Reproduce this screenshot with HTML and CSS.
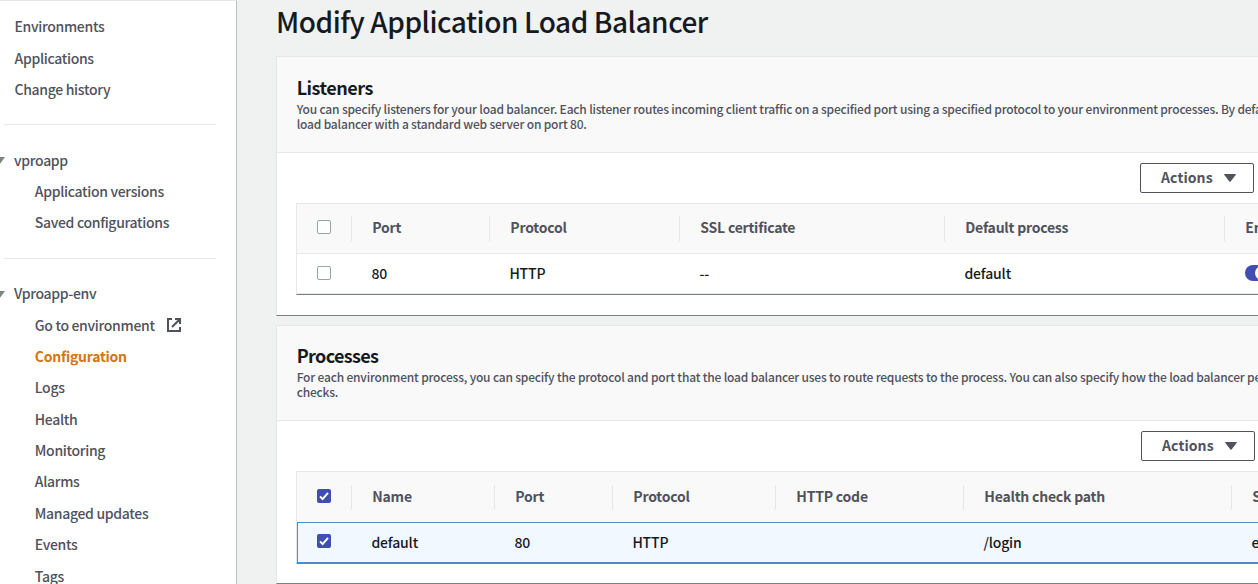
FILE: index.html
```
<!DOCTYPE html>
<html lang="en">
<head>
<meta charset="utf-8">
<title>Modify Application Load Balancer</title>
<link rel="stylesheet" href="styles.css">
</head>
<body>
<div class="app">
  <nav class="sidebar">
    <ul class="nav top">
      <li><a>Environments</a></li>
      <li><a>Applications</a></li>
      <li><a>Change history</a></li>
    </ul>
    <hr class="rule first">
    <div class="group">
      <svg class="caret" width="12" height="8" viewBox="0 0 12 8"><path d="M0 0h12L6 8z"/></svg>
      <span>vproapp</span>
    </div>
    <ul class="nav sub">
      <li><a>Application versions</a></li>
      <li><a>Saved configurations</a></li>
    </ul>
    <hr class="rule second">
    <div class="group">
      <svg class="caret" width="12" height="8" viewBox="0 0 12 8"><path d="M0 0h12L6 8z"/></svg>
      <span>Vproapp-env</span>
    </div>
    <ul class="nav sub">
      <li><a>Go to environment</a><svg class="external" width="16" height="16" viewBox="0 0 16 16"><path d="M6 2H2v12h12v-4M9 2h5v5M14 2L6 10"/></svg></li>
      <li class="active"><a>Configuration</a></li>
      <li><a>Logs</a></li>
      <li><a>Health</a></li>
      <li><a>Monitoring</a></li>
      <li><a>Alarms</a></li>
      <li><a>Managed updates</a></li>
      <li><a>Events</a></li>
      <li><a>Tags</a></li>
    </ul>
  </nav>
  <main class="main">
    <h1>Modify Application Load Balancer</h1>
    <section class="card">
      <header class="card-head">
        <h2>Listeners</h2>
        <p>You can specify listeners for your load balancer. Each listener routes incoming client traffic on a specified port using a specified protocol to your environment processes. By default,<br>load balancer with a standard web server on port 80.</p>
      </header>
      <div class="toolbar">
        <button class="actions">Actions<svg width="12" height="8" viewBox="0 0 12 8"><path d="M.6 0h10.8q.8 0 .4.8L6.6 7.5q-.6.7-1.2 0L.2.8Q-.2 0 .6 0z"/></svg></button>
      </div>
      <div class="table listeners">
        <div class="row head">
          <span class="pick"><i class="check"></i></span><span>Port</span><span>Protocol</span><span>SSL certificate</span><span>Default process</span><span>Enabled</span>
        </div>
        <div class="row body">
          <span class="pick"><i class="check"></i></span><span>80</span><span>HTTP</span><span>--</span><span>default</span><span><i class="toggle"></i></span>
        </div>
      </div>
    </section>
    <section class="card compact">
      <header class="card-head">
        <h2>Processes</h2>
        <p>For each environment process, you can specify the protocol and port that the load balancer uses to route requests to the process. You can also specify how the load balancer performs health<br>checks.</p>
      </header>
      <div class="toolbar shifted">
        <button class="actions">Actions<svg width="12" height="8" viewBox="0 0 12 8"><path d="M.6 0h10.8q.8 0 .4.8L6.6 7.5q-.6.7-1.2 0L.2.8Q-.2 0 .6 0z"/></svg></button>
      </div>
      <div class="table processes">
        <div class="row head">
          <span class="pick"><i class="check on"><svg width="14" height="14" viewBox="0 0 14 14"><path d="M3 7.4l2.6 2.7L11 3.8"/></svg></i></span><span>Name</span><span>Port</span><span>Protocol</span><span>HTTP code</span><span>Health check path</span><span>Stickiness</span>
        </div>
        <div class="row selected">
          <span class="pick"><i class="check on"><svg width="14" height="14" viewBox="0 0 14 14"><path d="M3 7.4l2.6 2.7L11 3.8"/></svg></i></span><span>default</span><span>80</span><span>HTTP</span><span></span><span>/login</span><span>enabled</span>
        </div>
      </div>
    </section>
  </main>
</div>
</body>
</html>
```
FILE: styles.css
```
* { box-sizing: border-box; }
body { margin: 0; font: 500 14px/20px "Noto Sans CJK JP", "Noto Sans", sans-serif; color: #16191f; background: #f0f2f2; }
h1, h2, p, ul { margin: 0; padding: 0; }
.app { display: flex; height: 584px; overflow: hidden; }

.sidebar { width: 237px; flex: none; height: 584px; overflow: hidden; background: #fff; border-top: 1px solid #e4e8e8; border-right: 1px solid #bfc2c2; color: #50525d; padding-top: 9.5px; letter-spacing: -0.32px; }
.nav { list-style: none; padding-left: 14.5px; }
.nav.sub { padding-left: 34.8px; }
.nav li, .group { height: 31.35px; display: flex; align-items: center; }
.rule { border: 0; height: 1px; background: #e6e9e9; }
.rule.first { margin: 19.45px 20px 19.1px 4px; }
.rule.second { margin: 19.85px 20px 18.8px 4px; }
.group { gap: 9px; margin-left: -7px; }
.caret { fill: #7b8584; margin-top: 3px; }
.active { color: #d5750c; font-weight: 700; letter-spacing: -0.25px; }
.external { margin: 1px 0 0 11px; fill: none; stroke: #50525d; stroke-width: 2; }

.main { flex: none; width: 1100px; padding-left: 39px; }
h1 { font-size: 28px; line-height: 42px; font-weight: 500; letter-spacing: -0.45px; margin-bottom: 14px; }
.card { height: 260px; margin-bottom: 9px; background: #fff; border: 1px solid #e3e7e7; border-bottom-color: #798180; }
.card-head { height: 96px; padding: 19px 0 0 19.7px; background: #f9f9f9; border-bottom: 1px solid #e6e9e9; }
.compact { height: 259px; }
.compact .card-head { height: 95px; padding-top: 18px; }
h2 { font-size: 18px; line-height: 22px; font-weight: 700; letter-spacing: -0.5px; }
.compact h2 { letter-spacing: -0.65px; }
.card-head p { font-size: 12px; line-height: 15px; letter-spacing: -0.188px; white-space: nowrap; color: #50525d; margin-top: 3px; }
.toolbar { padding: 10px 0 10px 863px; }
.toolbar.shifted { padding-left: 864px; }
.actions { display: flex; align-items: center; gap: 11px; width: 114px; height: 30px; padding: 0 0 2px 20px; background: #fff; border: 1px solid #50525d; border-radius: 2px; font: inherit; font-weight: 700; letter-spacing: 0.1px; color: #50525d; }
.actions svg { fill: #50525d; margin-top: 2px; }

.table { margin-left: 19px; border: 1px solid #e6e9e9; border-right: 0; border-bottom-color: #798180; }
.row { display: grid; height: 40px; align-items: center; letter-spacing: -0.15px; }
.row > span { padding: 0 0 1px 19.4px; white-space: nowrap; }
.row.body { border-bottom: 1px solid #e6e9e9; }
.listeners .row { grid-template-columns: 55px 138px 190px 265px 280px 200px; }
.processes .row { grid-template-columns: 55px 143px 118px 163px 188px 268px 200px; }
.row.head { height: 50px; background: #f9f9f9; color: #50525d; font-weight: 700; letter-spacing: -0.22px; border-bottom: 1px solid #e6e9e9; }
.row.head > span { height: 25px; line-height: 23px; padding-left: 20.3px; border-right: 1px solid #e3e7e7; }
.row > .pick, .row.head > .pick { display: flex; align-items: center; padding: 0 0 1px 20px; }
.row.head > .pick { padding-bottom: 3px; }
.processes .row.head { height: 51px; }
.processes .row.head > .pick { padding-bottom: 2px; }
.row.selected { height: 41px; margin-top: -1px; background: #f1f8ff; border: 1px solid #4a8ecb; border-right: 0; }
.row.selected > span:not(.pick) { padding-left: 18.4px; padding-bottom: 2px; }
.row.selected > .pick { padding-left: 19px; padding-bottom: 3px; }
.check { width: 14px; height: 14px; border: 1px solid #95a5a6; border-radius: 2px; background: #fff; }
.check.on { border: 0; background: #404eb3; }
.check svg { display: block; fill: none; stroke: #fff; stroke-width: 2; }
.toggle { display: flex; align-items: center; width: 26px; height: 16px; margin-left: .6px; padding-left: 10px; border-radius: 8px; background: #404eb3; }
.toggle::after { content: ""; width: 14px; height: 14px; border-radius: 7px; background: #fff; }
```
